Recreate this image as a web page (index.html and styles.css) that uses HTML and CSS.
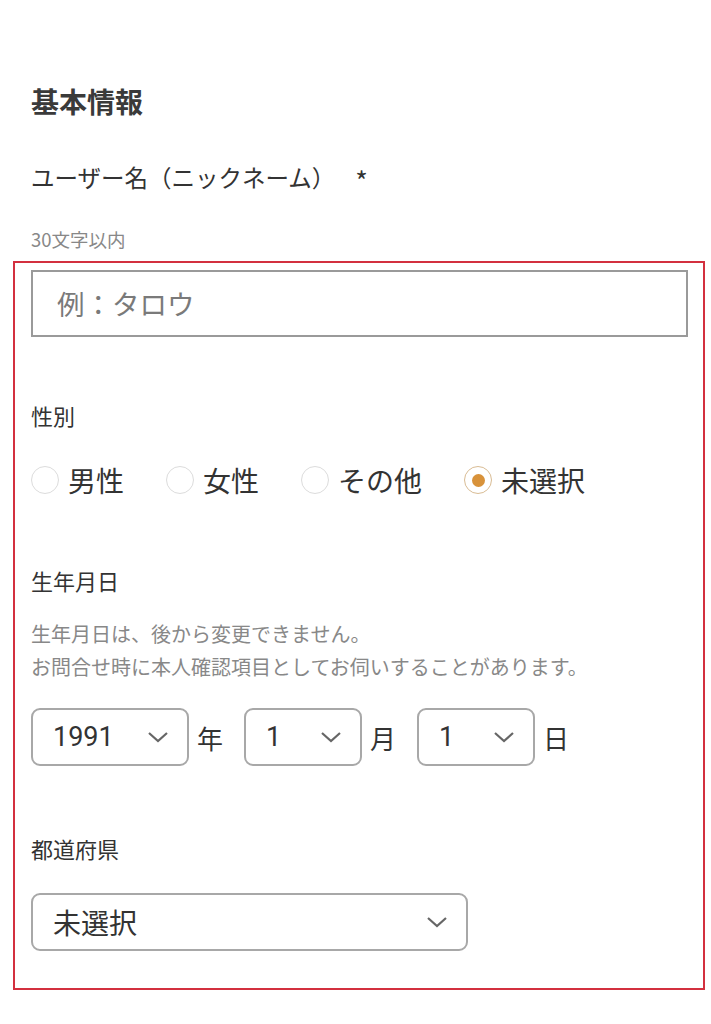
FILE: index.html
```html
<!DOCTYPE html>
<html lang="ja">
<head>
	<meta charset="utf-8">
	<title>基本情報</title>
	<link rel="stylesheet" href="styles.css">
</head>
<body>
<div class="page">
	<h2 class="title">基本情報</h2>
	<div class="label label-name">ユーザー名（ニックネーム）<span class="req">*</span></div>
	<div class="hint hint-name">30文字以内</div>

	<div class="box">
		<div class="text-input">例：タロウ</div>

		<div class="label label-gender">性別</div>
		<div class="radios">
			<div class="radio"><span class="dot"></span><span class="radio-text">男性</span></div>
			<div class="radio"><span class="dot"></span><span class="radio-text">女性</span></div>
			<div class="radio"><span class="dot"></span><span class="radio-text">その他</span></div>
			<div class="radio on"><span class="dot"></span><span class="radio-text">未選択</span></div>
		</div>

		<div class="label label-birth">生年月日</div>
		<div class="hint hint-birth">生年月日は、後から変更できません。<br>お問合せ時に本人確認項目としてお伺いすることがあります。</div>
		<div class="date-row">
			<div class="select sel-year"><span class="num">1991</span>
				<svg width="22" height="12" viewBox="0 0 22 12"><polyline points="2,2 11,10 20,2" fill="none" stroke="#666" stroke-width="2.2"/></svg>
			</div>
			<span class="unit">年</span>
			<div class="select sel-small"><span class="num">1</span>
				<svg width="22" height="12" viewBox="0 0 22 12"><polyline points="2,2 11,10 20,2" fill="none" stroke="#666" stroke-width="2.2"/></svg>
			</div>
			<span class="unit">月</span>
			<div class="select sel-small"><span class="num">1</span>
				<svg width="22" height="12" viewBox="0 0 22 12"><polyline points="2,2 11,10 20,2" fill="none" stroke="#666" stroke-width="2.2"/></svg>
			</div>
			<span class="unit">日</span>
		</div>

		<div class="label label-pref">都道府県</div>
		<div class="select sel-pref"><span>未選択</span>
			<svg width="22" height="12" viewBox="0 0 22 12"><polyline points="2,2 11,10 20,2" fill="none" stroke="#666" stroke-width="2.2"/></svg>
		</div>
	</div>
</div>
</body>
</html>
```

FILE: styles.css
```css
*{
	box-sizing: border-box;
}
body{
	margin: 0;
	background: #fff;
	color: #333;
	font-family: "Noto Sans CJK JP", "Noto Sans", sans-serif;
}
.page{
	padding: 81px 0 0 0;
}
.title{
	margin: 0 0 0 31px;
	font-size: 28px;
	line-height: 40px;
	font-weight: bold;
	color: #3a3a3a;
}
.label{
	font-size: 22px;
	line-height: 30px;
	color: #333;
}
.label-name{
	margin: 41px 0 0 31px;
	font-size: 23.5px;
	height: 30px;
}
.req{
	margin-left: 20px;
	font-size: 27px;
	line-height: 0;
	vertical-align: -5px;
}
.hint{
	color: #888;
}
.hint-name{
	margin: 36px 0 0 31px;
	font-size: 18.5px;
	line-height: 22px;
}
.box{
	margin: 11px 0 0 13px;
	width: 692px;
	border: 2px solid #d3303f;
	padding: 7px 15px 37px 16px;
}
.text-input{
	height: 67px;
	border: 2px solid #9a9a9a;
	padding-left: 24px;
	font-size: 27.5px;
	line-height: 63px;
	color: #7a7a7a;
}
.label-gender{
	margin-top: 63px;
}
.radios{
	display: flex;
	align-items: center;
	gap: 42px;
	height: 40px;
	margin-top: 30px;
}
.radio{
	display: flex;
	align-items: center;
}
.dot{
	width: 28px;
	height: 28px;
	border-radius: 50%;
	border: 1.5px solid #dcdcdc;
	display: flex;
	align-items: center;
	justify-content: center;
}
.radio.on .dot{
	border-color: #d9bc94;
}
.radio.on .dot::after{
	content: "";
	width: 13px;
	height: 13px;
	border-radius: 50%;
	background: #d8923a;
}
.radio-text{
	margin-left: 9px;
	font-size: 28px;
	line-height: 40px;
	color: #333;
}
.label-birth{
	margin-top: 65px;
}
.hint-birth{
	margin-top: 22px;
	font-size: 20px;
	line-height: 33px;
}
.date-row{
	display: flex;
	align-items: center;
	margin-top: 25px;
}
.select{
	height: 58px;
	border: 2px solid #a8a8a8;
	border-radius: 9px;
	display: flex;
	align-items: center;
	justify-content: space-between;
	padding: 0 18px 0 20px;
	font-size: 28px;
	color: #333;
}
.select .num{
	font-family: Roboto, "Noto Sans", sans-serif;
	font-size: 27px;
}
.sel-year{
	width: 158px;
}
.sel-small{
	width: 118px;
}
.unit{
	font-size: 26px;
	margin: 0 21px 0 8px;
	color: #333;
}
.label-pref{
	margin-top: 67px;
}
.sel-pref{
	margin-top: 30px;
	width: 437px;
}
```
